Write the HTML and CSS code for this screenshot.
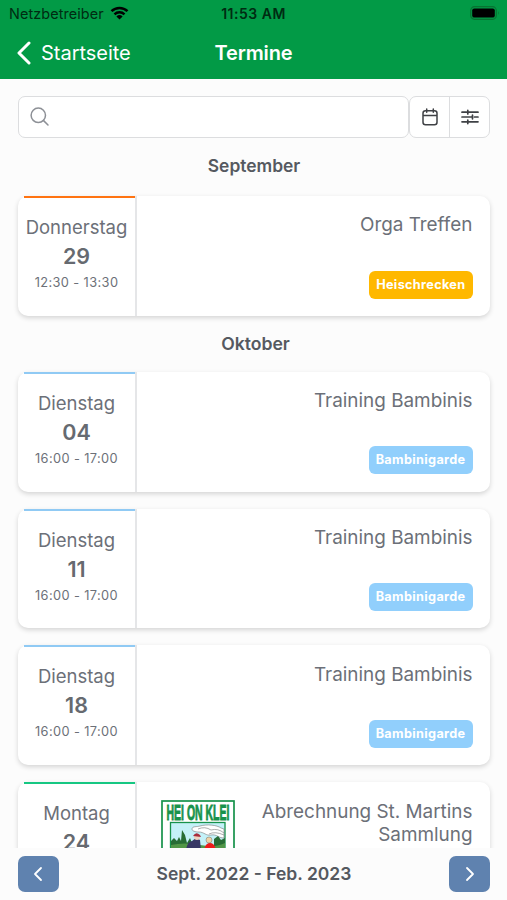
FILE: index.html
```
<!DOCTYPE html>
<html lang="de">
<head>
<meta charset="utf-8">
<title>Termine</title>
<link rel="stylesheet" href="styles.css">
</head>
<body>
<div class="app">
  <header class="header">
    <div class="status">
      <div class="carrier"><span>Netzbetreiber</span>
        <svg class="wifi" viewBox="0 0 18 14"><path d="M1 5.2a11.5 11.5 0 0 1 16 0M4 8.3a7.2 7.2 0 0 1 10 0" fill="none" stroke="#000" stroke-width="2.5"/><path d="M9 13.5 5.9 10.4a4.5 4.5 0 0 1 6.2 0z"/></svg>
      </div>
      <span class="clock">11:53 AM</span>
      <svg class="battery" viewBox="0 0 30 14"><rect x=".7" y=".7" width="25.6" height="12.6" rx="3.8" fill="none" stroke="#087332" stroke-width="1.2"/><rect x="2.2" y="2.4" width="22.6" height="9.2" rx="2.2"/><path d="M28 5q1.5 2 0 4z" fill="#087332"/></svg>
    </div>
    <div class="nav">
      <div class="back"><svg viewBox="0 0 16 24"><path d="M13 2 3 12l10 10" fill="none" stroke="#fff" stroke-width="3" stroke-linecap="round" stroke-linejoin="round"/></svg><span>Startseite</span></div>
      <h1 class="title">Termine</h1>
    </div>
  </header>
  <main class="content">
    <div class="toolbar">
      <div class="search"><svg viewBox="0 0 20 20"><g fill="none" stroke="#8d9096" stroke-width="1.5" stroke-linecap="round"><circle cx="8.3" cy="8.3" r="7.2"/><path d="m13.6 13.6 4.4 4.4"/></g></svg></div>
      <div class="tools">
        <div class="tool"><svg viewBox="0 0 18 18"><path d="M4.500 2.800h9q2.500 0 2.500 2.500v8.900q0 2.500-2.500 2.500h-9Q2 16.700 2 14.200V5.300q0-2.500 2.500-2.500zM2 7.500h14M5.700 1v3.300M12.300 1v3.300" fill="none" stroke="#3f4145" stroke-width="1.5" stroke-linecap="round"/></svg></div>
        <div class="tool"><svg viewBox="0 0 18 18"><path d="M1 4.200h4.500M7 4.200h10M1 9h9.500M13.500 9H17M1 13.800h4.500M7 13.800h10M6.800 2.400v3.600M11.500 7.200v3.600M6.800 12v3.600" fill="none" stroke="#3f4145" stroke-width="1.700" stroke-linecap="round"/></svg></div>
      </div>
    </div>
    <h2 class="month">September</h2>
    <article class="card orange">
      <div class="date"><span class="weekday">Donnerstag</span><b class="day">29</b><span class="time">12:30 - 13:30</span></div>
      <div class="info"><div class="details"><span class="name">Orga Treffen</span><span class="tag yellow">Heischrecken</span></div></div>
    </article>
    <h2 class="month october">Oktober</h2>
    <article class="card blue">
      <div class="date"><span class="weekday">Dienstag</span><b class="day">04</b><span class="time">16:00 - 17:00</span></div>
      <div class="info"><div class="details"><span class="name">Training Bambinis</span><span class="tag">Bambinigarde</span></div></div>
    </article>
    <article class="card blue">
      <div class="date"><span class="weekday">Dienstag</span><b class="day">11</b><span class="time">16:00 - 17:00</span></div>
      <div class="info"><div class="details"><span class="name">Training Bambinis</span><span class="tag">Bambinigarde</span></div></div>
    </article>
    <article class="card blue">
      <div class="date"><span class="weekday">Dienstag</span><b class="day">18</b><span class="time">16:00 - 17:00</span></div>
      <div class="info"><div class="details"><span class="name">Training Bambinis</span><span class="tag">Bambinigarde</span></div></div>
    </article>
    <article class="card green">
      <div class="date"><span class="weekday">Montag</span><b class="day">24</b></div>
      <div class="info">
        <svg class="poster" viewBox="0 0 74 86">
          <rect x="1" y="1" width="72" height="84" fill="#fff" stroke="#17924b" stroke-width="1.700"/>
          <text class="poster-text" x="12" y="19.500" transform="scale(.465 1)">HEI ON KLEI</text>
          <rect x="9.500" y="22.500" width="54.500" height="48" fill="#c4f1f8" stroke="#17924b" stroke-width="1.300"/>
          <g fill="#fff" stroke="#777" stroke-width=".6"><path d="M63 38c-6 0-7-4-13-3-5 1-7-3-12-3-4 0-7-1-7-3 0-3 5-2 8-3 7-2 17-1 21 2l3 1z"/><path d="M37 29q7-3 13 1 7-2 13 3M48 34q6-3 15 1" fill="none"/></g>
          <path d="M10 48v-7l3-3 3 3 2-4 2 4 1-11 3 5 2 8 3-5 2 5v5zM53 48v-9l4-3 3 4 4-2v10z" fill="#286c35"/>
          <path d="M10 45q13-3 29 0t25-2v27H10z" fill="#529647"/>
          <path d="M25 50q1-8 6-9l4-3 4 2 1 10z" fill="#373765"/>
          <path d="M43 51q1-8 6-8t6 8z" fill="#ee1c1c"/>
          <circle cx="36" cy="37" r="3" fill="#efd1bf"/><path d="M32 36q3-5 7-1l1 2z" fill="#a82d3b"/>
          <circle cx="48" cy="40" r="3" fill="#eed3a8" stroke="#555" stroke-width=".4"/>
        </svg>
        <div class="details"><span class="name">Abrechnung St. Martins Sammlung</span></div>
      </div>
    </article>
  </main>
  <footer class="footer">
    <div class="pager"><svg viewBox="0 0 14 18"><path d="m9 3-6 6 6 6" fill="none" stroke="#fff" stroke-width="1.800" stroke-linecap="round" stroke-linejoin="round"/></svg></div>
    <strong class="range">Sept. 2022 - Feb. 2023</strong>
    <div class="pager"><svg viewBox="0 0 14 18"><path d="m5 3 6 6-6 6" fill="none" stroke="#fff" stroke-width="1.800" stroke-linecap="round" stroke-linejoin="round"/></svg></div>
  </footer>
</div>
</body>
</html>
```
FILE: styles.css
```
* { box-sizing: border-box; }
body { margin: 0; background: #fcfcfc; font-family: Inter, "Liberation Sans", sans-serif; color: #6c7078; }
svg { display: block; flex: none; }
h1, h2 { margin: 0; }
.app { height: 900px; display: flex; flex-direction: column; overflow: hidden; }
.header { height: 79px; flex: none; background: #029a46; }
.status { height: 27px; padding: 0 7px 0 9px; display: grid; grid-template-columns: 1fr auto 1fr; align-items: center; color: #002b12; }
.carrier { display: flex; align-items: center; gap: 6px; font-size: 14.4px; letter-spacing: .1px; }
.wifi { width: 19px; height: 14px; margin-top: -2px; }
.clock { font-size: 14px; font-weight: 600; letter-spacing: .5px; margin-left: -2px; }
.battery { width: 30px; height: 14px; justify-self: end; margin-top: -1px; }
.nav { height: 51px; display: grid; grid-template-columns: 1fr auto 1fr; align-items: center; padding: 0 16px; color: #fff; }
.back { display: flex; align-items: center; gap: 9px; font-size: 20px; letter-spacing: -.02px; }
.back svg { width: 16px; height: 24px; }
.title { font-size: 20px; font-weight: 600; letter-spacing: -.1px; }
.content { flex: 1; min-height: 0; overflow: hidden; padding: 17px 17px 0 18px; }
.toolbar { display: flex; height: 41.5px; }
.search { flex: 1; background: #fff; border: 1.5px solid #dcdddf; border-radius: 7px; padding: 10px 11px; }
.search svg { width: 20px; height: 20px; }
.tools { width: 81px; display: flex; border: 1.5px solid #dcdddf; border-radius: 7px; background: #fff; }
.tool { flex: 1; display: flex; align-items: center; justify-content: center; }
.tool + .tool { border-left: 1.5px solid #dcdddf; }
.tool svg { width: 18px; height: 18px; }
.month { height: 58.5px; line-height: 56px; text-align: center; font-size: 17.4px; font-weight: 600; color: #555960; }
.october { height: 39px; line-height: 21px; font-size: 17.6px; padding-left: 3px; }
.card { height: 119.8px; margin-bottom: 17px; display: flex; background: #fff; border-radius: 10px; box-shadow: 0 2px 5px rgba(0,0,0,.16); }
.date { width: 119px; border-right: 2px solid #e5e6e8; display: flex; flex-direction: column; align-items: center; }
.date::before { content: ""; align-self: stretch; height: 2px; margin-left: 6px; background: var(--accent); }
.orange { --accent: #ff7311; }
.blue { --accent: #90caf4; }
.green { --accent: #16c782; }
.weekday { margin-top: 16px; font-size: 18.5px; line-height: 26px; }
.day { font-size: 21.5px; font-weight: 600; line-height: 33px; color: #666a70; }
.time { font-size: 12.8px; line-height: 20px; letter-spacing: .4px; }
.info { flex: 1; min-width: 0; display: flex; padding: 17.4px 17.5px 17.2px 24px; }
.poster { width: 74px; height: 86px; }
.poster-text { font: bold 22.5px "Liberation Sans", sans-serif; fill: #17924b; stroke: #17924b; stroke-width: 1px; }
.details { flex: 1; min-width: 0; display: flex; flex-direction: column; justify-content: space-between; align-items: flex-end; text-align: right; }
.name { font-size: 18.9px; line-height: 23px; }
.tag { height: 28px; line-height: 27px; padding: 0 7px; border-radius: 6px; color: #fff; background: #91cffc; font-size: 12.7px; font-weight: 700; letter-spacing: .33px; }
.yellow { background: #ffb800; }
.footer { height: 52px; flex: none; padding: 0 17px 1px 18px; display: flex; align-items: center; justify-content: space-between; background: #fcfcfc; }
.pager { width: 41px; height: 36px; display: flex; align-items: center; justify-content: center; border-radius: 7px; background: #5f82af; }
.pager svg { width: 14px; height: 18px; }
.range { font-size: 17.5px; font-weight: 600; color: #555960; }
```
